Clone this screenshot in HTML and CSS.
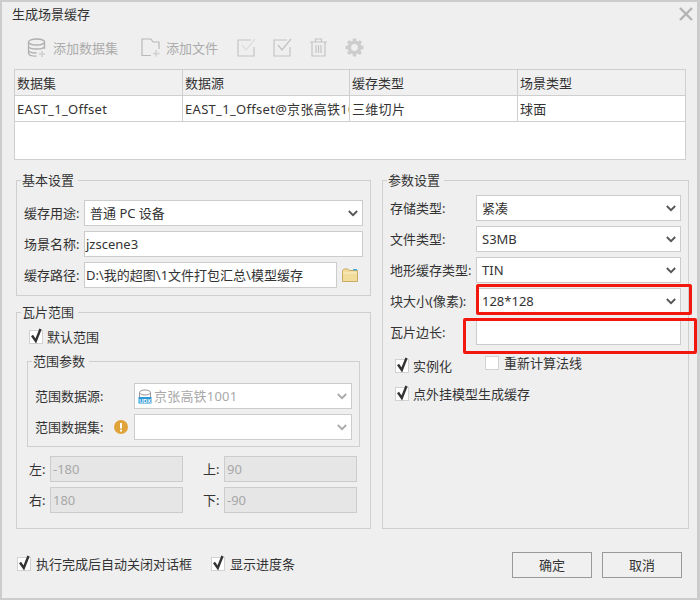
FILE: index.html
```html
<!DOCTYPE html>
<html lang="zh">
<head>
<meta charset="utf-8">
<title>生成场景缓存</title>
<link rel="stylesheet" href="styles.css">
</head>
<body>
<div class="window">
  <div class="titlebar">
    <span class="title">生成场景缓存</span>
    <svg class="close" width="14" height="14" viewBox="0 0 14 14"><path d="M1 1L13 13M13 1L1 13" stroke="#b4b4b4" stroke-width="2.4" fill="none"/></svg>
  </div>
  <div class="toolbar">
    <div class="tool tool-db">
      <svg width="20" height="20" viewBox="0 0 20 20" fill="none" stroke="#b0b0b0" stroke-width="1.3"><ellipse cx="9.5" cy="4" rx="8" ry="3"/><path d="M1.5 4V15C1.5 17 5 18.2 9.5 18.2M17.5 4V11M1.5 8C1.5 10 5 11 9.5 11S17.5 10 17.5 8M1.5 12C1.5 14 5 15 9.5 15"/><path d="M15 13V19M12 16H18" stroke="#cfcfcf" stroke-width="1.6"/></svg>
      <span>添加数据集</span>
    </div>
    <div class="tool tool-file">
      <svg width="19" height="19" viewBox="0 0 19 19" fill="none" stroke="#b8b8b8" stroke-width="1.2"><path d="M10 17.5H1V1H10L12 4H18V11"/><path d="M15 12V18.5M12 15.5H18.5" stroke="#cfcfcf" stroke-width="1.4"/></svg>
      <span>添加文件</span>
    </div>
    <svg class="tool-icon" width="19" height="19" viewBox="0 0 19 19" fill="none"><path d="M14 2H1V18H17V9" stroke="#c4c4c4" stroke-width="1.2"/><path d="M5 7L9 12L18 1" stroke="#dedede" stroke-width="1.3"/></svg>
    <svg class="tool-icon" width="19" height="19" viewBox="0 0 19 19" fill="none"><path d="M14 2H1V18H17V9" stroke="#c4c4c4" stroke-width="1.2"/><path d="M5 7L9 12L18 1" stroke="#c4c4c4" stroke-width="1.3"/></svg>
    <svg class="tool-icon" width="19" height="19" viewBox="0 0 19 19" fill="none" stroke="#c4c4c4" stroke-width="1.2"><path d="M1 4H18M6.5 4V1H12.5V4M3 4V18H16V4M7 7V15M9.5 7V15M12 7V15"/></svg>
    <svg class="tool-icon" width="19" height="19" viewBox="0 0 19 19" fill="none" stroke="#cdcdcd"><circle cx="9.5" cy="9.5" r="5.2" stroke-width="3.6"/><path d="M9.5 0.5V18.5M0.5 9.5H18.5M3.1 3.1L15.9 15.9M15.9 3.1L3.1 15.9" stroke-width="3.4" stroke-dasharray="3.2 12"/></svg>
  </div>
  <div class="grid-wrap">
    <table class="data-table">
      <colgroup><col class="col-a"><col class="col-b"><col class="col-c"><col class="col-d"></colgroup>
      <thead><tr><th>数据集</th><th>数据源</th><th>缓存类型</th><th>场景类型</th></tr></thead>
      <tbody><tr><td>EAST_1_Offset</td><td>EAST_1_Offset@京张高铁1001</td><td>三维切片</td><td>球面</td></tr></tbody>
    </table>
  </div>
  <div class="columns">
    <div class="col-left">
      <fieldset class="group basic">
        <legend>基本设置</legend>
        <div class="rows">
          <div class="row"><label class="lab lab-basic">缓存用途:</label><div class="combo"><span class="value">普通 PC 设备</span><svg class="chev" width="10" height="7" viewBox="0 0 12 8"><path d="M1 1L6 6L11 1" fill="none" stroke="#555" stroke-width="2.2"/></svg></div></div>
          <div class="row"><label class="lab lab-basic">场景名称:</label><div class="field">jzscene3</div></div>
          <div class="row"><label class="lab lab-basic">缓存路径:</label><div class="field path">D:\我的超图\1文件打包汇总\模型缓存</div>
            <svg class="folder" width="16" height="14" viewBox="0 0 16 14"><path d="M0.5 13.5V2.5L2 1H6L7 2.5H15.5V13.5Z" fill="#f2dc9c" stroke="#c9ab63"/><path d="M1 5H15" stroke="#fbf0c8"/><rect x="11" y="1" width="4" height="1.5" fill="#4aa8d8"/></svg>
          </div>
        </div>
      </fieldset>
      <fieldset class="group tiles">
        <legend>瓦片范围</legend>
        <div class="check default-check tight"><span class="box"><svg width="14" height="17" viewBox="0 0 14 17"><path d="M3 8.5L6.8 14L11.5 2" fill="none" stroke="#333" stroke-width="2.4"/></svg></span><span>默认范围</span></div>
        <fieldset class="group sub">
          <legend>范围参数</legend>
          <div class="rows">
            <div class="row"><label class="lab lab-sub">范围数据源:</label><div class="combo">
              <svg class="udx" width="14" height="15" viewBox="0 0 14 15"><ellipse cx="7" cy="3.5" rx="5.5" ry="2.5" fill="#fff" stroke="#999"/><path d="M1.5 3.5V8M12.5 3.5V8" stroke="#999"/><rect x="0.5" y="8" width="13" height="6.5" fill="#2d9ad6"/><text x="7" y="13.5" class="udx-text" text-anchor="middle">UDX</text></svg>
              <span class="value dim">京张高铁1001</span><svg class="chev" width="10" height="7" viewBox="0 0 12 8"><path d="M1 1L6 6L11 1" fill="none" stroke="#aaa" stroke-width="2.2"/></svg></div></div>
            <div class="row"><label class="lab lab-warn">范围数据集:<svg class="warn" width="14" height="14" viewBox="0 0 14 14"><circle cx="7" cy="7" r="7" fill="#e0a33a"/><path d="M7 3V8.5M7 9.8V11.5" stroke="#fff" stroke-width="2"/></svg></label><div class="combo"><span class="value"></span><svg class="chev" width="10" height="7" viewBox="0 0 12 8"><path d="M1 1L6 6L11 1" fill="none" stroke="#aaa" stroke-width="2.2"/></svg></div></div>
          </div>
        </fieldset>
        <div class="bounds">
          <label>左:</label><div class="field off">-180</div>
          <label class="far">上:</label><div class="field off">90</div>
          <label>右:</label><div class="field off">180</div>
          <label class="far">下:</label><div class="field off">-90</div>
        </div>
      </fieldset>
    </div>
    <fieldset class="group params">
      <legend>参数设置</legend>
      <div class="rows">
        <div class="row"><label class="lab lab-param">存储类型:</label><div class="combo"><span class="value">紧凑</span><svg class="chev" width="10" height="7" viewBox="0 0 12 8"><path d="M1 1L6 6L11 1" fill="none" stroke="#555" stroke-width="2.2"/></svg></div></div>
        <div class="row"><label class="lab lab-param">文件类型:</label><div class="combo"><span class="value">S3MB</span><svg class="chev" width="10" height="7" viewBox="0 0 12 8"><path d="M1 1L6 6L11 1" fill="none" stroke="#555" stroke-width="2.2"/></svg></div></div>
        <div class="row"><label class="lab lab-param">地形缓存类型:</label><div class="combo"><span class="value">TIN</span><svg class="chev" width="10" height="7" viewBox="0 0 12 8"><path d="M1 1L6 6L11 1" fill="none" stroke="#555" stroke-width="2.2"/></svg></div></div>
        <div class="row"><label class="lab lab-param">块大小(像素):</label><div class="combo"><span class="value">128*128</span><svg class="chev" width="10" height="7" viewBox="0 0 12 8"><path d="M1 1L6 6L11 1" fill="none" stroke="#555" stroke-width="2.2"/></svg></div></div>
        <div class="row"><label class="lab lab-param">瓦片边长:</label><div class="field"></div></div>
      </div>
      <div class="check-pair">
        <div class="check inst tight"><span class="box"><svg width="14" height="17" viewBox="0 0 14 17"><path d="M3 8.5L6.8 14L11.5 2" fill="none" stroke="#333" stroke-width="2.4"/></svg></span><span>实例化</span></div>
        <div class="check recalc"><span class="box"></span><span>重新计算法线</span></div>
      </div>
      <div class="check ext tight"><span class="box"><svg width="14" height="17" viewBox="0 0 14 17"><path d="M3 8.5L6.8 14L11.5 2" fill="none" stroke="#333" stroke-width="2.4"/></svg></span><span>点外挂模型生成缓存</span></div>
    </fieldset>
  </div>
  <div class="footer">
    <div class="check"><span class="box"><svg width="14" height="17" viewBox="0 0 14 17"><path d="M3 8.5L6.8 14L11.5 2" fill="none" stroke="#333" stroke-width="2.4"/></svg></span><span>执行完成后自动关闭对话框</span></div>
    <div class="check progress"><span class="box"><svg width="14" height="17" viewBox="0 0 14 17"><path d="M3 8.5L6.8 14L11.5 2" fill="none" stroke="#333" stroke-width="2.4"/></svg></span><span>显示进度条</span></div>
    <div class="buttons"><button class="btn">确定</button><button class="btn">取消</button></div>
  </div>
  <div class="mark mark-a"></div>
  <div class="mark mark-b"></div>
</div>
</body>
</html>
```
FILE: styles.css
```css
* { box-sizing: border-box; }
html, body { margin: 0; padding: 0; }
body {
  width: 700px;
  height: 600px;
  overflow: hidden;
  font: 13px/20px "Noto Sans", "Noto Sans CJK SC", sans-serif;
  color: #333;
}
.window {
  position: relative;
  width: 700px;
  height: 600px;
  display: flex;
  flex-direction: column;
  background: #efefef;
  border: solid #cccccc;
  border-width: 2px 3px 2px 2px;
}
.titlebar {
  height: 24px;
  flex: none;
  display: flex;
  align-items: center;
  justify-content: space-between;
  padding: 0 4px 0 10px;
}
.close { display: block; }
.toolbar {
  height: 43px;
  flex: none;
  display: flex;
  align-items: center;
  padding: 0 0 0 25px;
  color: #ababab;
}
.tool { display: flex; align-items: center; }
.tool svg { display: block; flex: none; }
.tool-db { width: 114px; gap: 6px; }
.tool-file { width: 96px; gap: 6px; }
.tool-icon { display: block; flex: none; margin-right: 17px; }
.grid-wrap {
  flex: none;
  width: 672px;
  height: 91px;
  margin-left: 12px;
  background: #fff;
  border: 1px solid #cfcfcf;
}
.data-table {
  border-collapse: separate;
  border-spacing: 0;
  table-layout: fixed;
  width: 670px;
}
.col-a { width: 168px; }
.col-b { width: 167px; }
.col-c { width: 168px; }
.col-d { width: 167px; }
.data-table th, .data-table td {
  height: 26px;
  padding: 0 0 0 2px;
  font-weight: 400;
  text-align: left;
  white-space: nowrap;
  overflow: hidden;
  border-right: 1px solid #cfcfcf;
  border-bottom: 1px solid #cfcfcf;
}
.data-table th:last-child, .data-table td:last-child { border-right: 0; }
.data-table th { background: #f0f0f0; }
.data-table td { letter-spacing: 0.3px; }
.columns {
  flex: none;
  display: grid;
  grid-template-columns: 355px 307px;
  column-gap: 11px;
  margin: 10px 0 0 14px;
  height: 359px;
}
.col-left { display: flex; flex-direction: column; gap: 6px; }
.group {
  margin: 0;
  min-width: 0;
  border: 1px solid #cfcfcf;
  padding: 0 7px;
}
.group legend {
  padding: 0 4px 0 1px;
  margin-left: -3px;
  line-height: 20px;
}
.basic { height: 126px; padding-top: 10px; }
.tiles { height: 227px; padding-top: 5px; }
.params { padding-top: 5px; }
.rows { display: flex; flex-direction: column; gap: 5px; }
.row { display: flex; align-items: center; height: 26px; }
.lab { flex: none; display: flex; align-items: center; }
.lab-basic { width: 60px; }
.lab-param { width: 86px; white-space: nowrap; }
.lab-sub { width: 99px; }
.lab-warn { width: 99px; padding-right: 6px; justify-content: space-between; }
.warn { display: block; flex: none; }
.combo, .field {
  flex: 1;
  min-width: 0;
  height: 26px;
  display: flex;
  align-items: center;
  background: #fff;
  border: 1px solid #cccccc;
}
.combo { padding: 0 4px 0 5px; }
.value { flex: 1; white-space: nowrap; }
.chev { display: block; flex: none; }
.field { padding: 0 1px; white-space: nowrap; overflow: hidden; }
.path { flex: none; width: 253px; }
.folder { display: block; flex: none; margin-left: 5px; }
.udx { display: block; flex: none; margin: 0 2px 0 -2px; }
.udx-text { font: 700 5.5px "Liberation Sans", sans-serif; fill: #fff; }
.dim { color: #a8a8a8; letter-spacing: 0.2px; }
.check { display: flex; align-items: center; gap: 5px; white-space: nowrap; }
.tight { gap: 4px; }
.box {
  flex: none;
  position: relative;
  width: 14px;
  height: 14px;
  background: #fff;
  border: 1px solid #d2d2d2;
}
.box svg { position: absolute; left: -1px; top: -4px; display: block; }
.default-check { margin: 0 0 4px 5px; height: 20px; }
.sub { width: 333px; margin-left: 3px; padding-top: 12px; padding-bottom: 6px; }
.bounds {
  display: grid;
  grid-template-columns: 21px 133px 41px 133px;
  grid-auto-rows: 26px;
  row-gap: 5px;
  margin: 9px 0 0 5px;
}
.bounds label { display: flex; align-items: center; }
.bounds .far { padding-left: 20px; }
.off { background: #e6e6e6; color: #a8a8a8; padding-left: 2px; }
.check-pair { display: flex; align-items: flex-start; margin: 8px 0 0 5px; }
.inst { width: 90px; padding-top: 3px; }
.ext { margin: 8px 0 0 5px; }
.footer {
  flex: none;
  display: flex;
  align-items: center;
  height: 26px;
  margin: 23px 0 0 15px;
}
.footer .check { margin-bottom: 2px; }
.progress { margin-left: 19px; }
.buttons { display: flex; gap: 10px; margin-left: auto; margin-right: 15px; }
.btn {
  width: 80px;
  height: 26px;
  padding: 0;
  font: inherit;
  color: #333;
  background: #f0f0f0;
  border: 1px solid #999;
  outline: 0;
}
.mark { position: absolute; border: 3px solid #f3180d; border-radius: 2px; pointer-events: none; }
.mark-a { left: 474px; top: 282px; width: 216px; height: 31px; }
.mark-b { left: 461px; top: 316px; width: 234px; height: 36px; }
```
